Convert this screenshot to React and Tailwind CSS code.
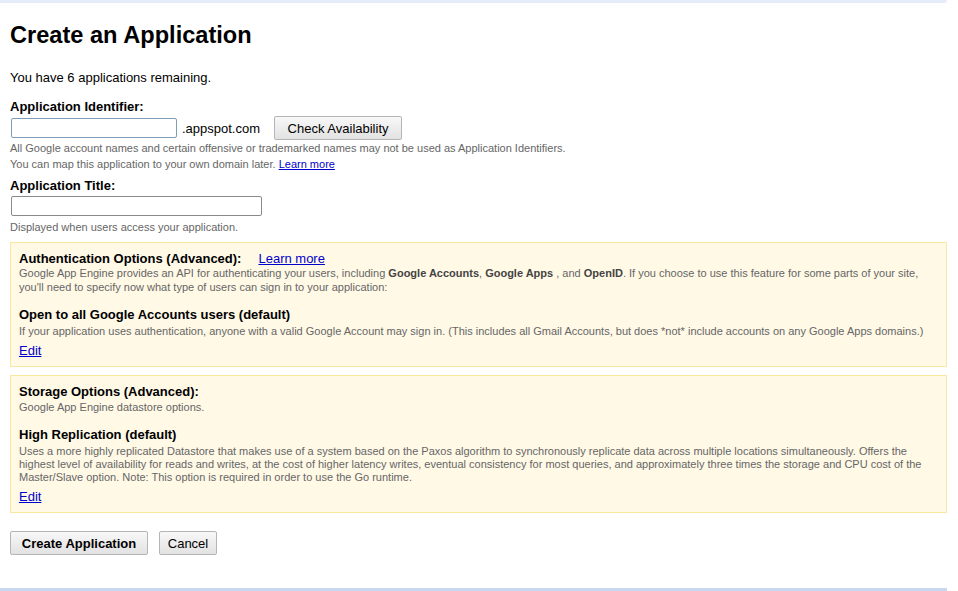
import React from "react";

const font = { fontFamily: '"Liberation Sans", Arial, sans-serif' };

function Btn({ children, bold, w }) {
  return (
    <button
      className={`${w} h-[24px] rounded-[2px] border border-[#b5b5b5] bg-gradient-to-b from-[#f8f8f8] to-[#e2e2e2] text-[13px] leading-[15px] text-black ${bold ? "font-bold" : ""}`}
    >
      {children}
    </button>
  );
}

function Box({ children }) {
  return (
    <div className="border border-[#fbe8a0] bg-[#fff9e6] px-[8px] pt-[8px] pb-[8.5px]">
      {children}
    </div>
  );
}

export default function App() {
  return (
    <div className="w-[947px] min-h-[591px] bg-white text-black flex flex-col" style={font}>
      <div className="h-[3px] bg-[#e5ecf9] rounded-br-[3px]" />
      <div className="pl-[10px] flex-1">
        <h1 className="mt-[18px] text-[23.6px] leading-[28px] font-bold">Create an Application</h1>
        <p className="mt-[21px] text-[13px] leading-[15px]">You have 6 applications remaining.</p>
        <div className="mt-[14px] text-[13px] leading-[15px] font-bold">Application Identifier:</div>
        <div className="mt-[2px] flex items-center h-[24px]">
          <input className="ml-[1px] w-[166px] h-[20px] rounded-[2px] border border-[#7f9db9] bg-white outline-none" />
          <span className="ml-[5px] text-[13px] leading-[15px]">.appspot.com</span>
          <span className="ml-[14px]">
            <Btn w="w-[128px]">Check Availability</Btn>
          </span>
        </div>
        <div className="text-[11px] leading-[16px] text-[#666]">
          <div>All Google account names and certain offensive or trademarked names may not be used as Application Identifiers.</div>
          <div>
            You can map this application to your own domain later.{" "}
            <a href="#" className="text-[#0000cc] underline">Learn more</a>
          </div>
        </div>
        <div className="mt-[6px] text-[13px] leading-[15px] font-bold">Application Title:</div>
        <input className="mt-[3px] ml-[1px] block w-[251px] h-[20px] rounded-[2px] border border-[#8a8a8a] bg-white outline-none" />
        <div className="mt-[4px] text-[11px] leading-[14px] text-[#666]">Displayed when users access your application.</div>

        <div className="mt-[8px]">
          <Box>
            <div className="text-[13px] leading-[15px] font-bold">
              Authentication Options (Advanced):
              <a href="#" className="ml-[17px] font-normal text-[#0000cc] underline">Learn more</a>
            </div>
            <p className="mt-[1px] text-[11px] leading-[13.5px] text-[#666]">
              Google App Engine provides an API for authenticating your users, including <b className="text-[#444]">Google Accounts</b>, <b className="text-[#444]">Google Apps</b> , and <b className="text-[#444]">OpenID</b>. If you choose to use this feature for some parts of your site, you'll need to specify now what type of users can sign in to your application:
            </p>
            <div className="mt-[13px] text-[13px] leading-[15px] font-bold">Open to all Google Accounts users (default)</div>
            <p className="mt-[3px] text-[11px] leading-[13.5px] text-[#666]">
              If your application uses authentication, anyone with a valid Google Account may sign in. (This includes all Gmail Accounts, but does *not* include accounts on any Google Apps domains.)
            </p>
            <a href="#" className="mt-[4px] block w-fit text-[13px] leading-[15px] text-[#0000cc] underline">Edit</a>
          </Box>
        </div>

        <div className="mt-[8px]">
          <Box>
            <div className="text-[13px] leading-[15px] font-bold">Storage Options (Advanced):</div>
            <p className="mt-[2px] text-[11px] leading-[13.5px] text-[#666]">Google App Engine datastore options.</p>
            <div className="mt-[12px] text-[13px] leading-[15px] font-bold">High Replication (default)</div>
            <p className="mt-[3px] text-[11px] leading-[13.4px] text-[#666]">
              Uses a more highly replicated Datastore that makes use of a system based on the Paxos algorithm to synchronously replicate data across multiple locations simultaneously. Offers the highest level of availability for reads and writes, at the cost of higher latency writes, eventual consistency for most queries, and approximately three times the storage and CPU cost of the Master/Slave option. Note: This option is required in order to use the Go runtime.
            </p>
            <a href="#" className="mt-[4px] block w-fit text-[13px] leading-[15px] text-[#0000cc] underline">Edit</a>
          </Box>
        </div>

        <div className="mt-[18px] flex items-center gap-[11px]">
          <Btn bold w="w-[138px]">Create Application</Btn>
          <Btn w="w-[58px]">Cancel</Btn>
        </div>
      </div>
      <div className="h-[3px] bg-[#c9d7f1]" />
    </div>
  );
}
